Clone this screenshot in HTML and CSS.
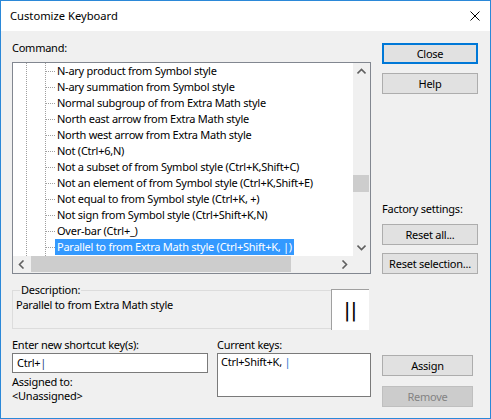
FILE: index.html
```html
<!DOCTYPE html>
<html>
<head>
<meta charset="utf-8">
<link rel="stylesheet" href="styles.css">
</head>
<body>
<div class="window">
  <div class="titlebar">
    <span class="title">Customize Keyboard</span>
    <svg class="close-x" width="10" height="10" viewBox="0 0 10 10"><path d="M0.5 0.5 L9.5 9.5 M9.5 0.5 L0.5 9.5" stroke="#000" stroke-width="1" fill="none"/></svg>
  </div>
  <div class="content">
    <div class="top">
      <div class="left">
        <div class="label">Command:</div>
        <div class="listbox">
          <div class="rows">
            <div class="row"><span class="conn"></span><span class="item">N-ary product from Symbol style</span></div>
            <div class="row"><span class="conn"></span><span class="item">N-ary summation from Symbol style</span></div>
            <div class="row"><span class="conn"></span><span class="item">Normal subgroup of from Extra Math style</span></div>
            <div class="row"><span class="conn"></span><span class="item">North east arrow from Extra Math style</span></div>
            <div class="row"><span class="conn"></span><span class="item">North west arrow from Extra Math style</span></div>
            <div class="row"><span class="conn"></span><span class="item">Not (Ctrl+6,N)</span></div>
            <div class="row"><span class="conn"></span><span class="item">Not a subset of from Symbol style (Ctrl+K,Shift+C)</span></div>
            <div class="row"><span class="conn"></span><span class="item">Not an element of from Symbol style (Ctrl+K,Shift+E)</span></div>
            <div class="row"><span class="conn"></span><span class="item">Not equal to from Symbol style (Ctrl+K, +)</span></div>
            <div class="row"><span class="conn"></span><span class="item">Not sign from Symbol style (Ctrl+Shift+K,N)</span></div>
            <div class="row"><span class="conn"></span><span class="item">Over-bar (Ctrl+_)</span></div>
            <div class="row"><span class="conn"></span><span class="item selected">Parallel to from Extra Math style (Ctrl+Shift+K, |)</span></div>
          </div>
          <div class="vscroll">
            <div class="arrow"><svg width="9" height="9" viewBox="0 0 9 9"><path d="M0.5 6.5 L4.5 2.5 L8.5 6.5" stroke="#606060" stroke-width="1.6" fill="none"/></svg></div>
            <div class="vtrack"><div class="vthumb"></div></div>
            <div class="arrow"><svg width="9" height="9" viewBox="0 0 9 9"><path d="M0.5 2.5 L4.5 6.5 L8.5 2.5" stroke="#606060" stroke-width="1.6" fill="none"/></svg></div>
          </div>
          <div class="hscroll">
            <div class="arrow"><svg width="9" height="9" viewBox="0 0 9 9"><path d="M6.5 0.5 L2.5 4.5 L6.5 8.5" stroke="#606060" stroke-width="1.6" fill="none"/></svg></div>
            <div class="htrack"><div class="hthumb"></div></div>
            <div class="arrow"><svg width="9" height="9" viewBox="0 0 9 9"><path d="M2.5 0.5 L6.5 4.5 L2.5 8.5" stroke="#606060" stroke-width="1.6" fill="none"/></svg></div>
          </div>
          <div class="corner"></div>
        </div>
      </div>
      <div class="right">
        <div class="btn btn-default">Close</div>
        <div class="btn btn-help">Help</div>
        <div class="factory">Factory settings:</div>
        <div class="btn btn-reset-all">Reset all...</div>
        <div class="btn btn-reset-sel">Reset selection...</div>
      </div>
    </div>
    <div class="desc-row">
      <div class="group">
        <span class="group-title">Description:</span>
        <div class="desc-text">Parallel to from Extra Math style</div>
      </div>
      <div class="preview"><span class="preview-glyph">||</span></div>
    </div>
    <div class="bottom">
      <div class="col-new">
        <div class="label">Enter new shortcut key(s):</div>
        <div class="input">Ctrl+<span class="bar-dark">|</span></div>
        <div class="small-label">Assigned to:</div>
        <div class="small-label">&lt;Unassigned&gt;</div>
      </div>
      <div class="col-cur">
        <div class="label">Current keys:</div>
        <div class="keys-box">Ctrl+Shift+K, <span class="bar-blue">|</span></div>
      </div>
      <div class="col-btns">
        <div class="btn btn-assign">Assign</div>
        <div class="btn btn-remove">Remove</div>
      </div>
    </div>
  </div>
</div>
</body>
</html>
```
FILE: styles.css
```css
* { box-sizing: border-box; }
html, body { margin: 0; padding: 0; }
body {
  font-family: "Noto Sans", "Open Sans", sans-serif;
  font-size: 11px;
  letter-spacing: -0.25px;
  color: #000;
}
.window {
  width: 491px;
  height: 419px;
  border: 1px solid #2b88d8;
  background: #f0f0f0;
  display: flex;
  flex-direction: column;
}
.titlebar {
  height: 30px;
  background: #fff;
  display: flex;
  align-items: center;
  justify-content: space-between;
  padding: 0 10px 0 9px;
}
.title {
  font-size: 11.2px;
  letter-spacing: 0;
  line-height: 16px;
}
.close-x { display: block; }
.content {
  padding: 9px 0 0 11px;
}
.top {
  display: flex;
}
.left {
  width: 359px;
}
.label {
  line-height: 16px;
  height: 16px;
  white-space: nowrap;
}
.listbox {
  margin-top: 6px;
  width: 359px;
  height: 212px;
  border: 1px solid #828790;
  display: grid;
  grid-template-columns: 340px 17px;
  grid-template-rows: 193px 17px;
}
.rows {
  background-color: #fff;
  background-image:
    repeating-linear-gradient(to bottom, #a0a0a0 0 1px, transparent 1px 2px),
    repeating-linear-gradient(to bottom, #a0a0a0 0 1px, transparent 1px 2px);
  background-size: 1px 100%, 1px 100%;
  background-position: 13px 0, 32px 0;
  background-repeat: no-repeat;
  overflow: hidden;
}
.row {
  height: 16px;
  display: flex;
  align-items: center;
  padding-left: 33px;
}
.conn {
  width: 9px;
  height: 0;
  border-top: 1px dotted #a0a0a0;
  flex: none;
}
.item {
  line-height: 16px;
  padding: 0 2px;
  white-space: nowrap;
}
.item.selected {
  background: #3399ff;
  color: #fff;
}
.vscroll {
  background: #f0f0f0;
  display: flex;
  flex-direction: column;
}
.arrow {
  width: 17px;
  height: 17px;
  flex: none;
  display: flex;
  align-items: center;
  justify-content: center;
}
.vtrack { flex: 1; }
.vthumb {
  margin: 95px 1px 0 0;
  width: 16px;
  height: 17px;
  background: #cdcdcd;
}
.hscroll {
  background: #f0f0f0;
  display: flex;
}
.htrack { flex: 1; }
.hthumb {
  margin: 0 0 0 1px;
  width: 260px;
  height: 16px;
  background: #cdcdcd;
}
.corner { background: #f0f0f0; }
.right {
  margin-left: 11px;
  width: 96px;
}
.btn {
  width: 96px;
  height: 21px;
  border: 1px solid #adadad;
  background: #e1e1e1;
  display: flex;
  align-items: center;
  justify-content: center;
  white-space: nowrap;
}
.btn-default {
  margin-top: 3px;
  border: 2px solid #0078d7;
}
.btn-help { margin-top: 9px; }
.factory {
  margin-top: 107px;
  line-height: 16px;
  white-space: nowrap;
}
.btn-reset-all { margin-top: 7px; }
.btn-reset-sel { margin-top: 8px; }
.desc-row {
  margin-top: 15px;
  display: flex;
  align-items: center;
  height: 41px;
}
.group {
  width: 319px;
  height: 39px;
  border: 1px solid #dcdcdc;
  border-right: none;
}
.group-title {
  display: block;
  width: max-content;
  margin: -9px 0 0 7px;
  padding: 0 1px;
  background: #f0f0f0;
  line-height: 16px;
}
.desc-text {
  margin-top: -1px;
  padding-left: 3px;
  line-height: 16px;
  white-space: nowrap;
}
.preview {
  width: 38px;
  height: 41px;
  background: #fff;
  border-left: 1px solid #a0a0a0;
  border-top: 1px solid #a0a0a0;
  display: flex;
  align-items: center;
  justify-content: center;
}
.preview-glyph {
  font-family: "DejaVu Sans", sans-serif;
  font-size: 20px;
  letter-spacing: 0;
  line-height: 20px;
}
.bottom {
  margin-top: 7px;
  display: flex;
}
.col-new { width: 196px; }
.input {
  width: 196px;
  height: 20px;
  border: 1px solid #7a7a7a;
  background: #fff;
  line-height: 18px;
  padding-left: 4px;
  white-space: nowrap;
}
.bar-dark { color: #1c3f7a; }
.bar-blue { color: #2f74d0; }
.small-label {
  line-height: 14px;
  white-space: nowrap;
}
.input + .small-label { margin-top: 2px; }
.col-cur {
  margin-left: 9px;
  width: 154px;
}
.keys-box {
  width: 154px;
  height: 44px;
  border: 1px solid #7a7a7a;
  background: #fff;
  padding: 0 0 0 3px;
  line-height: 16px;
  white-space: nowrap;
}
.col-btns {
  margin-left: 11px;
}
.btn-assign {
  width: 91px;
  margin-top: 18px;
}
.btn-remove {
  width: 91px;
  margin-top: 10px;
  background: #cccccc;
  border-color: #bfbfbf;
  color: #838383;
}
```
